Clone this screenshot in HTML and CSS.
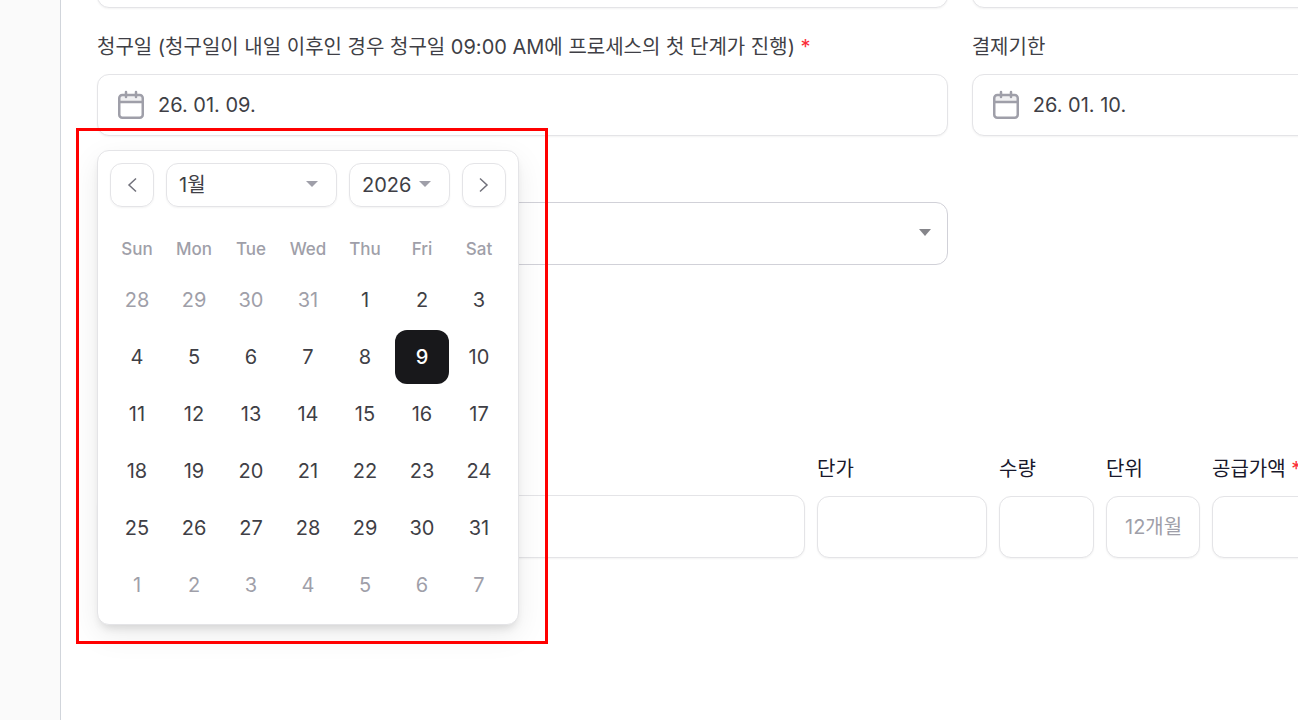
FILE: index.html
```html
<!DOCTYPE html>
<html lang="ko">
<head>
  <meta charset="UTF-8">
  <meta name="viewport" content="width=device-width, initial-scale=1">
  <title>청구서</title>
  <link rel="stylesheet" href="styles.css">
</head>
<body>

  <div class="layout">
    <aside class="sidebar"></aside>

    <main class="main">
      <form class="form">
        <!-- Previous row, scrolled under the top edge -->
        <div class="row row-scrolled">
          <input class="box" type="text" aria-label="항목 1">
          <input class="box" type="text" aria-label="항목 2">
        </div>

        <!-- Dates -->
        <div class="row row-dates">
          <div class="field">
            <label for="billingDate">청구일 (청구일이 내일 이후인 경우 청구일 09:00 AM에 프로세스의 첫 단계가 진행) <span class="required">*</span></label>
            <div class="date-wrap">
              <div class="box date-box">
                <svg class="icon" viewBox="0 0 26 30" aria-hidden="true">
                  <path class="icon-fill" d="M2 6h22v6H2z" />
                  <rect x="1.25" y="5" width="23.5" height="22.75" rx="3" />
                  <path d="M2 12h22M8 2v5M18 2v5" />
                </svg>
                <input type="text" id="billingDate" value="26. 01. 09.">
              </div>

              <!-- Calendar popup -->
              <div class="calendar">
                <div class="calendar-head">
                  <button type="button" class="nav" aria-label="이전 달">
                    <svg viewBox="0 0 16 16"><path d="M12 1.5L5 8l7 6.5" /></svg>
                  </button>
                  <div class="picker picker-month">
                    <select aria-label="월"><option>1월</option></select>
                  </div>
                  <div class="picker picker-year">
                    <select aria-label="연도"><option>2026</option></select>
                  </div>
                  <button type="button" class="nav" aria-label="다음 달">
                    <svg viewBox="0 0 16 16"><path d="M4 1.5L11 8l-7 6.5" /></svg>
                  </button>
                </div>
                <table class="days">
                  <thead>
                    <tr><th>Sun</th><th>Mon</th><th>Tue</th><th>Wed</th><th>Thu</th><th>Fri</th><th>Sat</th></tr>
                  </thead>
                  <tbody>
                    <tr>
                      <td><button type="button" class="out">28</button></td>
                      <td><button type="button" class="out">29</button></td>
                      <td><button type="button" class="out">30</button></td>
                      <td><button type="button" class="out">31</button></td>
                      <td><button type="button">1</button></td>
                      <td><button type="button">2</button></td>
                      <td><button type="button">3</button></td>
                    </tr>
                    <tr>
                      <td><button type="button">4</button></td>
                      <td><button type="button">5</button></td>
                      <td><button type="button">6</button></td>
                      <td><button type="button">7</button></td>
                      <td><button type="button">8</button></td>
                      <td><button type="button" class="selected">9</button></td>
                      <td><button type="button">10</button></td>
                    </tr>
                    <tr>
                      <td><button type="button">11</button></td>
                      <td><button type="button">12</button></td>
                      <td><button type="button">13</button></td>
                      <td><button type="button">14</button></td>
                      <td><button type="button">15</button></td>
                      <td><button type="button">16</button></td>
                      <td><button type="button">17</button></td>
                    </tr>
                    <tr>
                      <td><button type="button">18</button></td>
                      <td><button type="button">19</button></td>
                      <td><button type="button">20</button></td>
                      <td><button type="button">21</button></td>
                      <td><button type="button">22</button></td>
                      <td><button type="button">23</button></td>
                      <td><button type="button">24</button></td>
                    </tr>
                    <tr>
                      <td><button type="button">25</button></td>
                      <td><button type="button">26</button></td>
                      <td><button type="button">27</button></td>
                      <td><button type="button">28</button></td>
                      <td><button type="button">29</button></td>
                      <td><button type="button">30</button></td>
                      <td><button type="button">31</button></td>
                    </tr>
                    <tr>
                      <td><button type="button" class="out">1</button></td>
                      <td><button type="button" class="out">2</button></td>
                      <td><button type="button" class="out">3</button></td>
                      <td><button type="button" class="out">4</button></td>
                      <td><button type="button" class="out">5</button></td>
                      <td><button type="button" class="out">6</button></td>
                      <td><button type="button" class="out">7</button></td>
                    </tr>
                  </tbody>
                </table>
              </div>
            </div>
          </div>

          <div class="field">
            <label for="dueDate">결제기한</label>
            <div class="box date-box">
              <svg class="icon" viewBox="0 0 26 30" aria-hidden="true">
                <path class="icon-fill" d="M2 6h22v6H2z" />
                <rect x="1.25" y="5" width="23.5" height="22.75" rx="3" />
                <path d="M2 12h22M8 2v5M18 2v5" />
              </svg>
              <input type="text" id="dueDate" value="26. 01. 10.">
            </div>
          </div>
        </div>

        <div class="row row-select">
          <div class="select-wrap">
            <select class="box" aria-label="선택"><option></option></select>
          </div>
        </div>

        <!-- Line items -->
        <div class="items">
          <div class="field">
            <input class="box item-name" type="text" aria-label="품목">
          </div>
          <div class="field">
            <label for="price">단가</label>
            <input class="box" type="text" id="price">
          </div>
          <div class="field">
            <label for="quantity">수량</label>
            <input class="box" type="text" id="quantity">
          </div>
          <div class="field">
            <label for="unit">단위</label>
            <input class="box" type="text" id="unit" placeholder="12개월">
          </div>
          <div class="field">
            <label for="amount">공급가액 <span class="required">*</span></label>
            <input class="box" type="text" id="amount">
          </div>
        </div>
      </form>
    </main>
  </div>

</body>
</html>
```
FILE: styles.css
```css
* {
  box-sizing: border-box;
  margin: 0;
  padding: 0;
}

body {
  font-family: Inter, "Noto Sans CJK KR", sans-serif;
  font-size: 20px;
  line-height: 28px;
  color: #3f3f46;
  background: white;
}

input,
select,
button {
  font: inherit;
  color: inherit;
  background: none;
  border: none;
  outline: none;
}

.layout {
  display: flex;
  min-height: 100vh;
}

.sidebar {
  width: 61px;
  flex-shrink: 0;
  background: #fafafa;
  border-right: 1px solid #d1d5db;
}

.main {
  flex: 1;
  min-width: 0;
  padding-left: 36px;
  overflow: hidden;
}

/* the form runs past the right edge of the window */
.form {
  margin-right: -24px;
}

.row {
  display: grid;
  grid-template-columns: 17fr 7fr;
  gap: 24px;
}

.row-scrolled {
  margin-top: -54px;
}

.row-dates {
  margin-top: 25px;
}

.row-select {
  margin-top: 66px;
}

.field {
  display: flex;
  flex-direction: column;
  justify-content: flex-end;
  gap: 13px;
  min-width: 0;
}

label {
  white-space: nowrap;
}

.required {
  color: #fb2c36;
}

.box {
  width: 100%;
  height: 62px;
  padding: 0 18px;
  background: white;
  border: 1px solid #e4e4e7;
  border-radius: 12px;
  box-shadow: 0 1px 2px rgba(0, 0, 0, 0.05);
}

.date-wrap {
  position: relative;
}

.date-box {
  display: flex;
  align-items: center;
  gap: 14px;
  padding: 0 20px;
}

.date-box input {
  flex: 1;
  min-width: 0;
}

.icon {
  width: 26px;
  height: 30px;
  fill: none;
  stroke: #9f9fa9;
  stroke-width: 2.5;
  stroke-linecap: round;
}

.icon .icon-fill {
  fill: #f0f0f2;
  stroke: none;
}

.select-wrap {
  position: relative;
}

select {
  appearance: none;
}

.select-wrap .box {
  display: block;
  height: 63px;
  border-color: #d1d1d8;
  box-shadow: none;
}

.select-wrap::after,
.picker::after {
  content: "";
  position: absolute;
  border: 6px solid transparent;
  border-top-color: #85858a;
  border-bottom: none;
  pointer-events: none;
}

.select-wrap::after {
  top: 27px;
  right: 17px;
  border-top-width: 7px;
}

/* Calendar popup */
.calendar {
  position: absolute;
  z-index: 10;
  top: calc(100% + 14px);
  left: 0;
  width: 422px;
  padding: 12px;
  background: white;
  border: 1px solid #e4e4e7;
  border-radius: 12px;
  box-shadow: 0 10px 30px rgba(0, 0, 0, 0.08), 0 6px 8px -3px rgba(0, 0, 0, 0.12);
}

/* highlight frame */
.calendar::after {
  content: "";
  position: absolute;
  inset: -23px -30px -20px -22px;
  border: 3px solid red;
  pointer-events: none;
}

.calendar-head {
  display: flex;
  gap: 12px;
}

.nav,
.picker select {
  height: 44px;
  border: 1px solid #e4e4e7;
  border-radius: 12px;
  box-shadow: 0 1px 2px rgba(0, 0, 0, 0.05);
}

.nav {
  display: flex;
  align-items: center;
  justify-content: center;
  width: 44px;
}

.nav svg {
  width: 16px;
  height: 16px;
  fill: none;
  stroke: #71717b;
  stroke-width: 1.5;
}

.picker {
  position: relative;
}

.picker-month {
  flex: 1;
}

.picker-year {
  width: 101px;
}

.picker select {
  display: block;
  width: 100%;
  padding: 0 12px;
}

.picker::after {
  top: 18px;
  right: 19px;
  border-top-color: #9f9fa9;
}

.days {
  table-layout: fixed;
  width: 402px;
  margin: 18px -3px -3px;
  border-spacing: 3px;
}

.days th {
  height: 42px;
  font-size: 17px;
  font-weight: 500;
  color: #9f9fa9;
}

.days button {
  display: block;
  width: 100%;
  height: 54px;
  border-radius: 12px;
}

.days .out {
  color: #9f9fa9;
}

.days .selected {
  color: white;
  font-weight: 500;
  background: #18181b;
}

/* Line items */
.items {
  display: grid;
  grid-template-columns: 708fr 170fr 95fr 94fr 110fr;
  gap: 12px;
  margin-top: 190px;
}

.items label {
  color: #18182b;
}

.items .item-name {
  height: 63px;
}

.items ::placeholder {
  color: #9f9fa9;
}
```
